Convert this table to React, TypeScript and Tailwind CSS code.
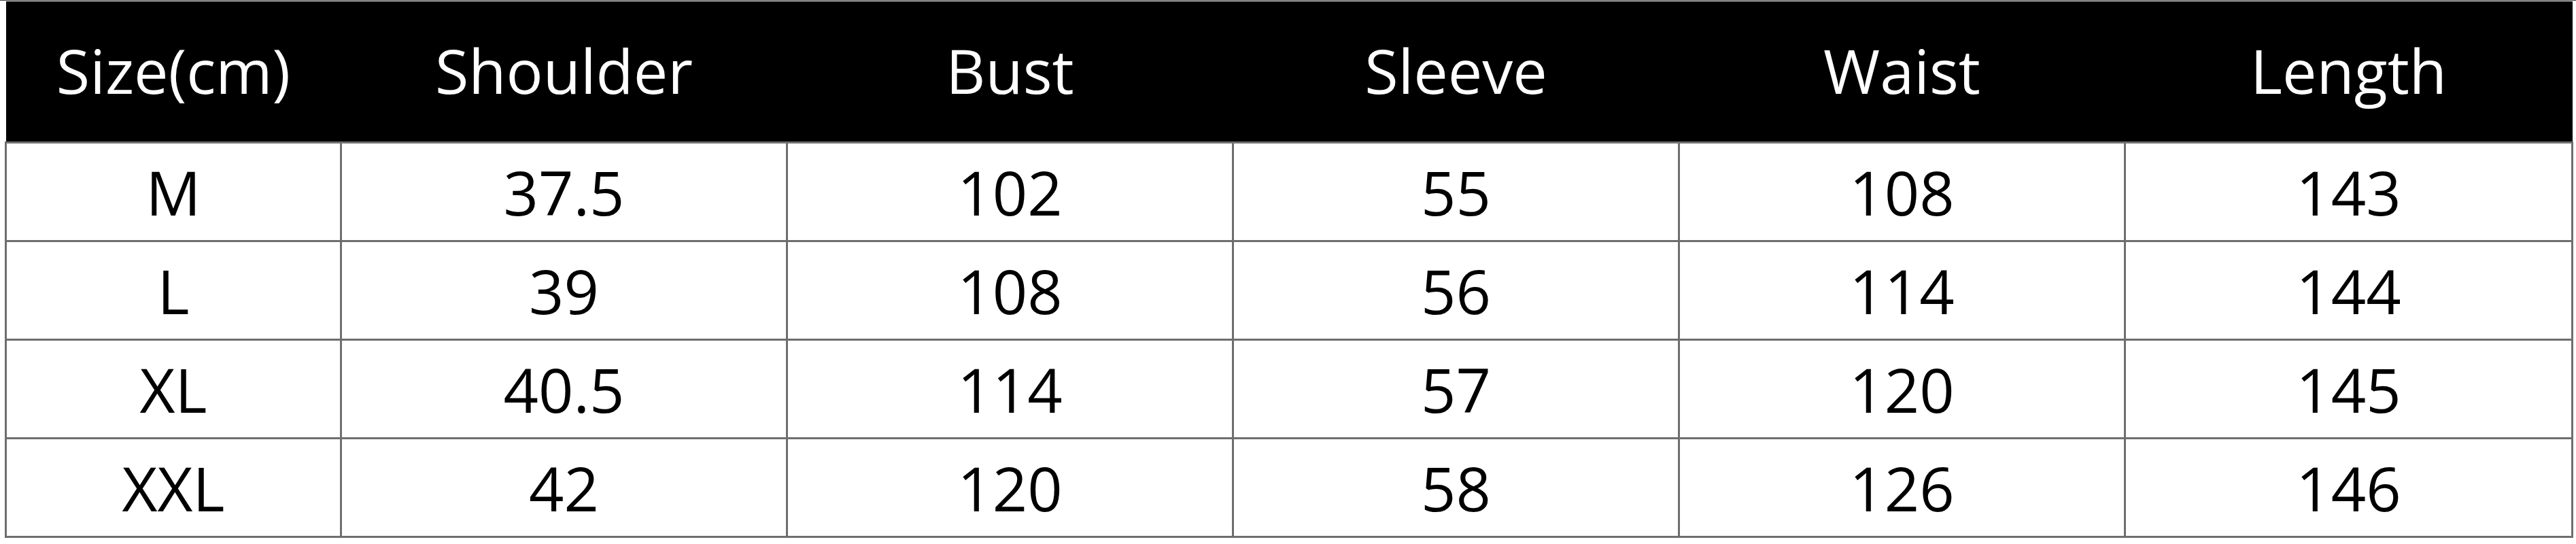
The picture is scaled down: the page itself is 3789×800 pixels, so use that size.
import React from "react";

const headers = ["Size(cm)", "Shoulder", "Bust", "Sleeve", "Waist", "Length"];

const rows = [
    ["M", "37.5", "102", "55", "108", "143"],
    ["L", "39", "108", "56", "114", "144"],
    ["XL", "40.5", "114", "57", "120", "145"],
    ["XXL", "42", "120", "58", "126", "146"],
];

export default function App() {
    return (
        <div className="w-[3789px] h-[800px] bg-white pl-[7px] pt-px border-t border-[#3a3a3a]" style={{ fontFamily: '"Open Sans", "Noto Sans", sans-serif' }}>
            <table className="table-fixed border-collapse w-[3775px] text-[90px] leading-none">
                <colgroup>
                    <col className="w-[493px]" />
                    <col className="w-[656px]" />
                    <col className="w-[656px]" />
                    <col className="w-[656px]" />
                    <col className="w-[656px]" />
                    <col className="w-[658px]" />
                </colgroup>
                <thead>
                    <tr className="h-[207px] bg-black text-white">
                        {headers.map((h) => (
                            <th key={h} className="font-normal text-center align-middle p-0 pb-[4px]">
                                {h}
                            </th>
                        ))}
                    </tr>
                </thead>
                <tbody>
                    {rows.map((r) => (
                        <tr key={r[0]} className="h-[145px] text-black">
                            {r.map((c, i) => (
                                <td key={i} className="border-[3px] border-[#6e6e6e] text-center align-middle p-0">
                                    {c}
                                </td>
                            ))}
                        </tr>
                    ))}
                </tbody>
            </table>
        </div>
    );
}
